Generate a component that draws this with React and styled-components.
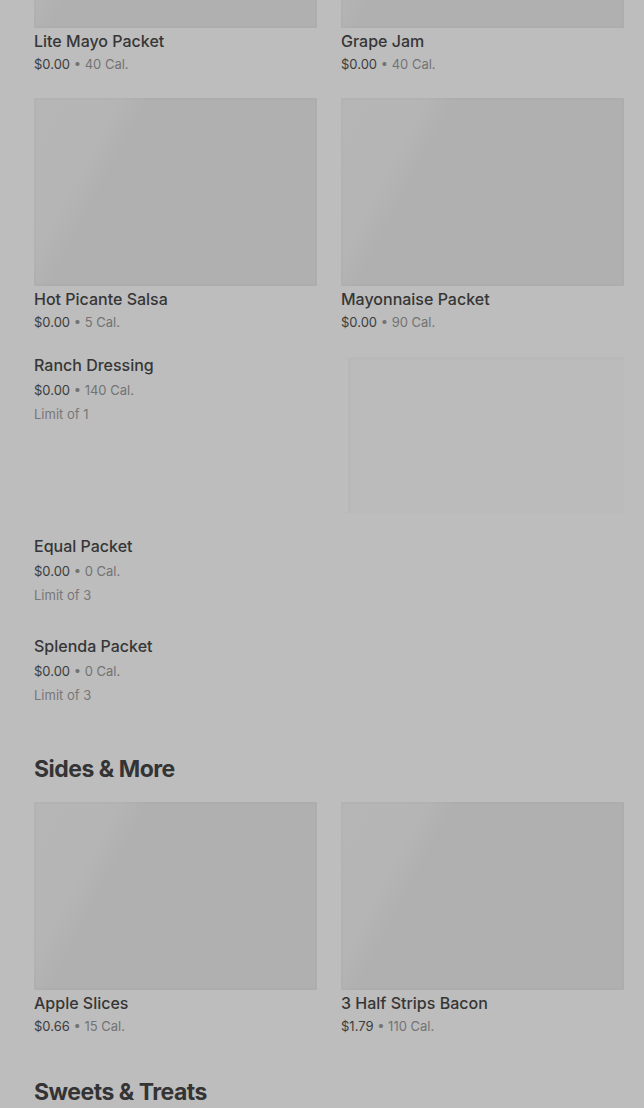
import React from "react";
import styled, { createGlobalStyle } from "styled-components";

const GlobalStyle = createGlobalStyle`
  html, body {
    margin: 0;
    padding: 0;
    background: #bdbdbd;
    font-family: Inter, "Noto Sans", "Liberation Sans", sans-serif;
    overflow: hidden;
  }
`;

const Page = styled.main`
  padding: 0 20px 0 34px;
  margin-top: -160px;
`;

const Grid = styled.div`
  display: grid;
  grid-template-columns: 1fr 1fr;
  column-gap: 24px;
`;

const Card = styled.div`
  padding-bottom: 24px;
`;

const Thumb = styled.div`
  height: 188px;
  background: linear-gradient(118deg, #b6b6b6 0%, #b5b5b5 22%, #b0b0b0 30%, #b0b0b0 100%);
  box-shadow: inset 0 0 0 2px rgba(0, 0, 0, 0.01);
`;

const Name = styled.div`
  margin-top: ${(p) => (p.$list ? "0" : "2px")};
  font-size: 16px;
  line-height: ${(p) => (p.$list ? "19px" : "22px")};
  font-weight: 500;
  color: #363636;
`;

const Meta = styled.div`
  margin-top: ${(p) => (p.$list ? "5px" : "2px")};
  font-size: 13px;
  line-height: 20px;
  color: #3c3c3c;
`;

const Cal = styled.span`
  color: #737373;
`;

const Limit = styled.div`
  margin-top: 4px;
  font-size: 13px;
  line-height: 20px;
  color: #777777;
`;

const ListItem = styled.div`
  display: flex;
  justify-content: space-between;
  align-items: flex-start;
  padding-bottom: 24px;
`;

const ListText = styled.div`
  padding-bottom: 8px;
`;

const SideThumb = styled.div`
  width: 276px;
  height: 156px;
  margin-top: 1px;
  background: #bbbbbb;
  border-left: 3px solid #b8b8b8;
  border-top: 3px solid #b9b9b9;
  box-sizing: border-box;
`;

const SectionTitle = styled.h2`
  margin: 16px 0 17px;
  font-size: 23px;
  line-height: 32px;
  font-weight: 700;
  letter-spacing: -0.5px;
  color: #343434;
`;

const Price = ({ price, cal }) => (
  <>
    {price} <Cal>• {cal} Cal.</Cal>
  </>
);

const GridItem = ({ name, price, cal }) => (
  <Card>
    <Thumb />
    <Name>{name}</Name>
    <Meta>
      <Price price={price} cal={cal} />
    </Meta>
  </Card>
);

const RowItem = ({ name, price, cal, limit, thumb }) => (
  <ListItem>
    <ListText>
      <Name $list>{name}</Name>
      <Meta $list>
        <Price price={price} cal={cal} />
      </Meta>
      <Limit>Limit of {limit}</Limit>
    </ListText>
    {thumb && <SideThumb />}
  </ListItem>
);

const condiments = [
  { name: "Lite Mayo Packet", price: "$0.00", cal: 40 },
  { name: "Grape Jam", price: "$0.00", cal: 40 },
  { name: "Hot Picante Salsa", price: "$0.00", cal: 5 },
  { name: "Mayonnaise Packet", price: "$0.00", cal: 90 },
];

const sides = [
  { name: "Apple Slices", price: "$0.66", cal: 15 },
  { name: "3 Half Strips Bacon", price: "$1.79", cal: 110 },
];

export default function App() {
  return (
    <>
      <GlobalStyle />
      <Page>
        <Grid>
          {condiments.map((item) => (
            <GridItem key={item.name} {...item} />
          ))}
        </Grid>
        <RowItem name="Ranch Dressing" price="$0.00" cal={140} limit={1} thumb />
        <RowItem name="Equal Packet" price="$0.00" cal={0} limit={3} />
        <RowItem name="Splenda Packet" price="$0.00" cal={0} limit={3} />

        <SectionTitle>Sides &amp; More</SectionTitle>
        <Grid>
          {sides.map((item) => (
            <GridItem key={item.name} {...item} />
          ))}
        </Grid>

        <SectionTitle>Sweets &amp; Treats</SectionTitle>
      </Page>
    </>
  );
}
